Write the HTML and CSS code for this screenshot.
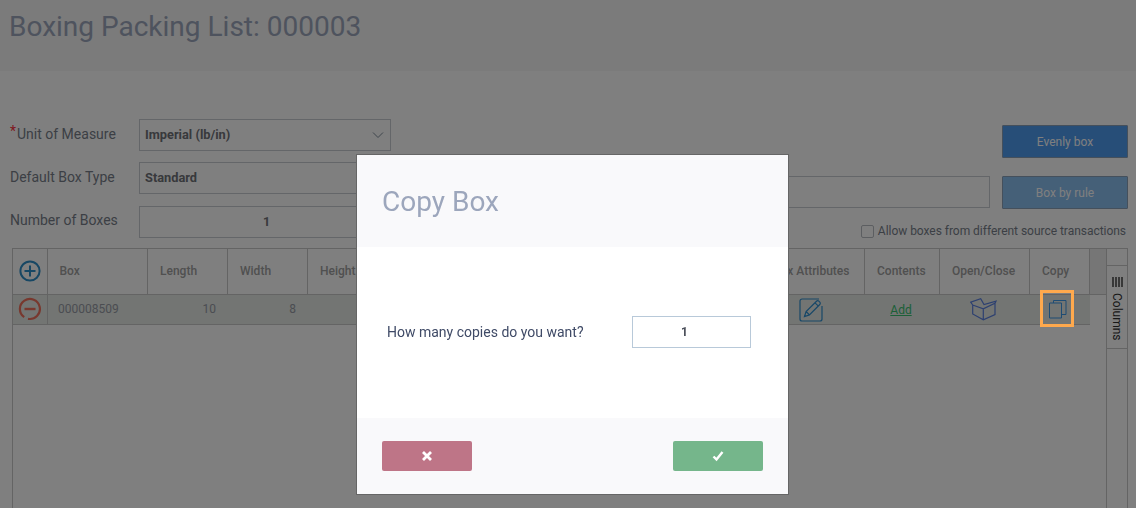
FILE: index.html
```html
<!DOCTYPE html>
<html lang="en">
<head>
<meta charset="utf-8">
<title>Boxing Packing List</title>
<link rel="stylesheet" href="styles.css">
</head>
<body>
<header class="page-head"><h1 class="page-title">Boxing Packing List: 000003</h1></header>
<section class="form">
  <div class="form-left">
    <div class="row"><label class="label"><span class="req">*</span>Unit of Measure</label>
      <div class="field field-select">Imperial (lb/in)
        <svg class="chev" width="12" height="8" viewBox="0 0 12 8"><path d="M1 1.5l5 5 5-5" fill="none" stroke="#7d8a99" stroke-width="1"/></svg>
      </div></div>
    <div class="row row-b"><label class="label">Default Box Type</label><div class="field">Standard</div></div>
    <div class="row row-c"><label class="label label-up">Number of Boxes</label><div class="field field-num">1</div></div>
  </div>
  <div class="form-right">
    <div class="form-top">
      <div class="field-wide"></div>
      <div class="actions">
        <button class="btn btn-even">Evenly box</button>
        <button class="btn btn-rule">Box by rule</button>
      </div>
    </div>
    <div class="check-row"><span class="check"></span><span>Allow boxes from different source transactions</span></div>
  </div>
</section>
<section class="grid-wrap">
  <table class="grid">
    <thead><tr>
      <th class="c-add"><svg class="ico-plus" width="24" height="24" viewBox="0 0 24 24"><circle cx="12" cy="12" r="9.6" fill="none" stroke="#2f8fc8" stroke-width="2"/><path d="M12 6.5v11M6.5 12h11" stroke="#2f8fc8" stroke-width="2"/></svg></th>
      <th class="c-box">Box</th><th class="c-len">Length</th><th class="c-wid">Width</th><th class="c-hei">Height</th><th class="c-mid"></th>
      <th class="c-attr">Box Attributes</th><th class="c-con">Contents</th><th class="c-open">Open/Close</th><th class="c-copy">Copy</th><th class="c-fill"></th>
    </tr></thead>
    <tbody><tr>
      <td class="t-center"><svg class="ico-minus" width="24" height="24" viewBox="0 0 24 24"><path d="M6.2 20.2A10 10 0 1 1 10 21.8" fill="none" stroke="#f0705c" stroke-width="2.2"/><path d="M6.5 12h11" stroke="#f0705c" stroke-width="2.4"/></svg></td>
      <td>000008509</td><td class="t-right">10</td><td class="t-right">8</td><td></td><td></td>
      <td class="t-center"><svg class="ico-edit" width="24" height="24" viewBox="0 0 24 24"><path d="M20 1H3a2 2 0 0 0-2 2v18a2 2 0 0 0 2 2h18a2 2 0 0 0 2-2V8" fill="none" stroke="#2f8fd0" stroke-width="1.2"/><path d="M5.5 18.5l1.6-5L17.5 3.2a1.6 1.6 0 0 1 2.3 0l1 1a1.6 1.6 0 0 1 0 2.3L10.4 16.9zM7.1 13.5l3.3 3.4M16 4.8l3.4 3.4" fill="none" stroke="#2f8fd0" stroke-width="1.2"/></svg></td>
      <td class="t-center"><a class="add" href="#">Add</a></td>
      <td class="t-center"><svg class="ico-open" width="27" height="24" viewBox="0 0 27 24"><path d="M2.700 7V16L13.300 21.800 25 16.500V5.200L13.300 10.800 2.700 7zM13.300 10.800V21.800M2.700 7L.7 4.200 10.700 .8 14 6.500 26 3.200 25 5.200" fill="none" stroke="#5a80e0" stroke-width="1.200"/></svg></td>
      <td class="t-center cell-copy"><svg class="ico-copy" width="20" height="20" viewBox="0 0 20 20"><path d="M5.500 3V.5H18V14.500H13.500" fill="none" stroke="#3c98e8" stroke-width="1"/><path d="M1.500 3h12v15h-12z" fill="none" stroke="#3c98e8" stroke-width="1"/></svg><span class="spot"></span></td>
      <td class="t-plain"></td>
    </tr></tbody>
  </table>
  <aside class="rail">
    <div class="rail-top"></div>
    <div class="rail-tab"><span class="bars"><i></i><i></i><i></i><i></i></span><span class="rail-text">Columns</span></div>
  </aside>
</section>
<div class="overlay">
  <div class="modal">
    <div class="modal-head"><h2 class="modal-title">Copy Box</h2></div>
    <div class="modal-body"><span class="modal-q">How many copies do you want?</span><div class="modal-input">1</div></div>
    <div class="modal-foot">
      <button class="mbtn mbtn-no"><svg width="12" height="12" viewBox="0 0 12 12"><path d="M2 2l8 8M10 2l-8 8" stroke="#fff" stroke-width="2.800"/></svg></button>
      <button class="mbtn mbtn-yes"><svg width="12" height="12" viewBox="0 0 12 12"><path d="M1.500 6.500l3 3L10.500 2" fill="none" stroke="#fff" stroke-width="2.400"/></svg></button>
    </div>
  </div>
</div>
</body>
</html>
```
FILE: styles.css
```css
* { box-sizing: border-box; }
html, body { height: 100%; }
body {
  margin: 0; height: 100vh; overflow: hidden; display: flex; flex-direction: column;
  background: #fff; font-family: Roboto, "Liberation Sans", sans-serif; font-size: 14px; color: #6e7480;
}
.page-head { height: 71px; flex: none; background: #f6f6f6; padding: 9px 9px 0; }
.page-title { margin: 0; font-size: 28px; line-height: 36px; font-weight: 400; color: #9ca6bc; }

.form { display: flex; flex: none; padding: 48px 8px 0 10px; height: 177px; }
.form-left { width: 381px; flex: none; }
.row { display: flex; align-items: center; height: 32px; }
.row-b { margin-top: 11px; }
.row-c { margin-top: 12px; }
.label { width: 129px; flex: none; color: #787e8a; margin-top: -2px; }
.label-up { margin-top: -4px; }
.req { color: #ff3040; font-size: 14px; position: relative; top: -3px; margin-right: 1px; }
.field {
  flex: 1; height: 32px; position: relative; border: 1px solid #c8ccd2; padding: 0 5px; line-height: 30px;
  font-size: 12.8px; font-weight: 700; color: #707278;
}
.field-num { text-align: center; padding-right: 2px; font-size: 12.5px; }
.chev { position: absolute; right: 6px; top: 11px; }
.form-right { flex: 1; display: flex; flex-direction: column; }
.form-top { display: flex; gap: 12px; align-items: flex-end; padding-left: 10px; }
.field-wide { flex: 1; height: 32px; border: 1px solid #c8ccd2; margin-bottom: 1px; }
.actions { width: 126px; display: flex; flex-direction: column; gap: 18px; margin-top: 6px; }
.btn { height: 33px; border: 1px solid #8aa0b8; border-radius: 1px; font: 12px Roboto, sans-serif; color: #fff; padding: 0; }
.btn-even { background: #4e9cf0; }
.btn-rule { background: #8ac0f0; }
.check-row { display: flex; justify-content: flex-end; align-items: center; margin-top: 15px; padding-right: 2px; gap: 4px; font-size: 12px; letter-spacing: -.03px; color: #787e8a; }
.check { width: 13px; height: 13px; border: 1px solid #b8bcc2; border-radius: 2px; }

.grid-wrap { flex: 1; display: flex; margin: 0 8px 0 12px; border: 1px solid #c8c8c8; border-bottom: 0; }
.grid { border-collapse: separate; border-spacing: 0; table-layout: fixed; width: 1093px; align-self: flex-start; font-size: 12px; }
.grid th { height: 46px; padding: 0 0 2px 12px; border-right: 1px solid #c8c8c8; border-bottom: 1px solid #c8c8c8; text-align: left; font-weight: 500; color: #a0a0a0; }
.grid th.c-box { padding-left: 11.500px; }
.grid th.c-attr { padding-left: 20px; }
.grid td { height: 30px; padding: 0 0 2px 10px; background: #e6eae6; border-bottom: 1px solid #c8c8c8; color: #969aa4; }
.grid th.c-add { padding: 0; text-align: center; }
.ico-plus { margin-top: -2px; vertical-align: middle; }
.c-add { width: 35px; } .c-box { width: 100px; } .c-len { width: 80px; } .c-wid { width: 80px; } .c-hei { width: 90px; }
.c-mid { width: 355px; } .c-attr { width: 112px; } .c-con { width: 75px; } .c-open { width: 90px; } .c-copy { width: 60px; } .c-fill { width: 16px; }
.grid th.c-fill { background: #ececec; border-right: 0; }
.grid td.t-center { padding: 0; text-align: center; }
.grid td.t-center svg { vertical-align: middle; }
.grid td:first-child { border-right: 1px solid #c8c8c8; }
.grid td.t-right { padding: 0 12px 2px 0; text-align: right; }
.grid td.t-plain { background: transparent; border-bottom: 0; }
.grid td.t-center .ico-minus { margin-top: -2px; }
.grid td.t-center .ico-edit { margin-left: 4px; }
.grid td.t-center .ico-open { margin-right: 3px; }
.grid td.t-center .ico-copy { margin-right: 4px; }
.add { color: #38c070; font-size: 12px; text-decoration: underline; margin-right: 3px; }
.cell-copy { position: relative; }
.spot { position: absolute; left: 10px; top: -5px; width: 34px; height: 37px; border: 3px solid #ffa94d; z-index: 20; }

.rail { width: 21px; flex: none; border-left: 1px solid #c8c8c8; }
.rail-top { height: 17px; border-bottom: 1px solid #c8c8c8; }
.rail-tab { height: 83px; border-bottom: 1px solid #c8c8c8; display: flex; flex-direction: column; align-items: center; padding-top: 11px; }
.bars { display: flex; gap: 1px; height: 10px; }
.bars i { width: 2px; background: #707070; }
.rail-text { writing-mode: vertical-rl; font-size: 12px; color: #303030; margin-top: 6px; }

.overlay { position: fixed; inset: 0; z-index: 10; background: rgba(0, 0, 0, .5); }
.modal { position: absolute; left: 357px; top: 155px; width: 431px; height: 339px; background: #fff; box-shadow: 0 0 0 1px #666; display: flex; flex-direction: column; }
.modal-head { height: 92px; flex: none; background: #f9f9fb; padding: 29px 25px 0; }
.modal-title { margin: 0; font-size: 28px; line-height: 36px; font-weight: 400; color: #9ca6bc; }
.modal-body { flex: 1; display: flex; align-items: center; padding: 0 37px 1px 30px; justify-content: space-between; }
.modal-q { color: #3f4a66; }
.modal-input { width: 119px; height: 32px; border: 1px solid #b8c9d9; padding-right: 14px; text-align: center; line-height: 30px; font-size: 12px; font-weight: 700; color: #4a4f5a; }
.modal-foot { height: 76px; flex: none; background: #f9f9fb; display: flex; justify-content: space-between; padding: 23px 25px 0; }
.mbtn { width: 90px; height: 30px; border: 0; border-radius: 2px; padding: 0; display: flex; align-items: center; justify-content: center; }
.mbtn-no { background: #be7587; }
.mbtn-yes { background: #75b68b; }
```
